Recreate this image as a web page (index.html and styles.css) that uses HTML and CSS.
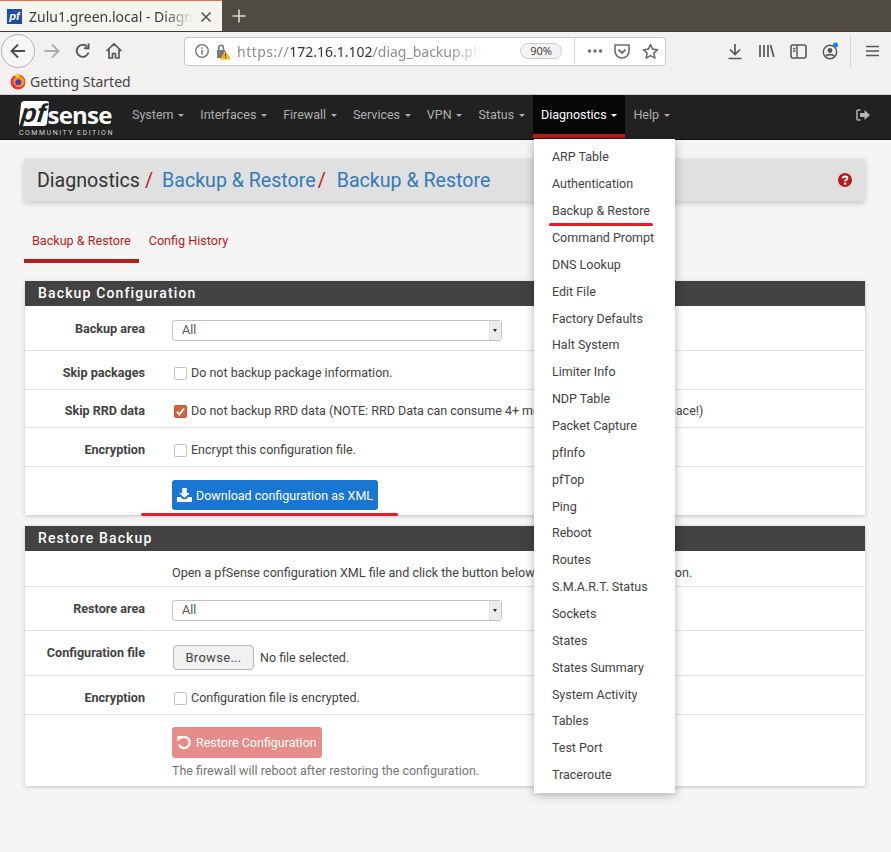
FILE: index.html
```html
<!DOCTYPE html>
<html lang="en">
<head>
    <meta charset="UTF-8">
    <title>Zulu1.green.local - Diagnostics: Backup &amp; Restore</title>
    <link rel="stylesheet" href="styles.css">
</head>
<body>
  <div class="tabbar">
    <div class="tab">
      <span class="favicon">pf</span>
      <span class="tab-title">Zulu1.green.local - Diagnostics</span>
      <svg class="tab-close" width="12" height="12" viewBox="0 0 12 12"><path d="M1.5 1.5l9 9M10.5 1.5l-9 9" stroke="#57534d" stroke-width="1.6"/></svg>
    </div>
    <svg class="tab-new" width="16" height="16" viewBox="0 0 16 16"><path d="M8 1.5v13M1.5 8h13" stroke="#d8d6d2" stroke-width="1.6"/></svg>
  </div>

  <div class="toolbar">
    <div class="back-btn">
      <svg width="18" height="18" viewBox="0 0 18 18"><path d="M16 9H3M9 2.5L2.5 9 9 15.5" fill="none" stroke="#4b4a48" stroke-width="1.8"/></svg>
    </div>
    <svg class="tool" width="18" height="18" viewBox="0 0 18 18"><path d="M1.5 9H15M9 2.5L15.5 9 9 15.5" fill="none" stroke="#adacaa" stroke-width="1.8"/></svg>
    <svg class="tool" width="18" height="18" viewBox="0 0 18 18"><path d="M14.5 10.5A6 6 0 1 1 13 4.6M14.6 1.6v4.6H10" fill="none" stroke="#57565a" stroke-width="1.9"/></svg>
    <svg class="tool" width="18" height="18" viewBox="0 0 18 18"><path d="M1.5 9L9 2l7.500 7M4 7.500V16h3.500v-4.500h3V16H14V7.500" fill="none" stroke="#57565a" stroke-width="1.7"/></svg>

    <div class="urlbar">
      <svg width="16" height="16" viewBox="0 0 16 16"><circle cx="8" cy="8" r="6.300" fill="none" stroke="#6d6d6d" stroke-width="1.300"/><path d="M8 7v4.500M8 4.200v1.600" stroke="#6d6d6d" stroke-width="1.500"/></svg>
      <svg class="lock" width="16" height="17" viewBox="0 0 16 17"><path d="M2 7h8v8H2z" fill="#7a7a7a"/><path d="M3.800 7V4.500a2.300 2.300 0 0 1 4.600 0V7" fill="none" stroke="#7a7a7a" stroke-width="1.600"/><path d="M10.500 7.500L16 16.500H5z" fill="#f5b418"/><path d="M10.500 10.500v3M10.500 14.500v1" stroke="#4a3a10" stroke-width="1"/></svg>
      <span class="url"><span class="url-dim url-scheme">https://</span>172.16.1.102<span class="url-dim">/diag_backup.php</span></span>
      <span class="zoom-pill">90%</span>
      <span class="url-sep"></span>
      <svg width="16" height="16" viewBox="0 0 16 16" fill="#6d6d6d"><circle cx="2.500" cy="8" r="1.700"/><circle cx="8" cy="8" r="1.700"/><circle cx="13.500" cy="8" r="1.700"/></svg>
      <svg class="pocket" width="16" height="16" viewBox="0 0 16 16"><path d="M1 2h14v6a7 7 0 0 1-14 0z" fill="none" stroke="#6d6d6d" stroke-width="1.600" stroke-linejoin="round"/><path d="M4.500 6.500L8 10l3.500-3.500" fill="none" stroke="#6d6d6d" stroke-width="1.800"/></svg>
      <svg class="star" width="17" height="17" viewBox="0 0 17 17"><path d="M8.500 1.500l2.100 4.600 5 .6-3.700 3.400 1 5-4.400-2.500-4.400 2.500 1-5L1.400 6.700l5-.6z" fill="none" stroke="#6d6d6d" stroke-width="1.600" stroke-linejoin="round"/></svg>
    </div>

    <div class="tool-right">
      <svg width="16" height="17" viewBox="0 0 16 17"><path d="M8 1v10M3 6.500L8 11.500l5-5M1.500 15.500h13" fill="none" stroke="#57565a" stroke-width="1.700"/></svg>
      <svg width="17" height="16" viewBox="0 0 17 16"><path d="M2 2v12M6 2v12M10 2v12M12.500 2l3.300 12" fill="none" stroke="#57565a" stroke-width="1.700"/></svg>
      <svg width="17" height="15" viewBox="0 0 17 15"><rect x="1" y="1" width="15" height="13" rx="2" fill="none" stroke="#57565a" stroke-width="1.600"/><path d="M7 1v13M3 4.500h2.500M3 7h2.500" stroke="#57565a" stroke-width="1.400"/></svg>
      <svg width="17" height="18" viewBox="0 0 17 18"><circle cx="8" cy="10" r="6.700" fill="none" stroke="#57565a" stroke-width="1.400"/><circle cx="8" cy="8.500" r="2.400" fill="#57565a"/><path d="M3.800 14.500c.6-2.500 7.800-2.500 8.400 0" fill="none" stroke="#57565a" stroke-width="1.600"/><circle cx="13.500" cy="3" r="2.500" fill="#0a84ff"/></svg>
      <span class="tool-sep"></span>
      <svg width="13" height="12" viewBox="0 0 13 12"><path d="M0 1.500h13M0 6h13M0 10.500h13" stroke="#57565a" stroke-width="1.700"/></svg>
    </div>
  </div>

  <div class="bookmarks">
    <svg width="16" height="16" viewBox="0 0 16 16"><circle cx="8" cy="8" r="7.500" fill="#e8353f"/><circle cx="9" cy="7.500" r="5.500" fill="#ff980e"/><circle cx="8.300" cy="8.300" r="3" fill="#4a3bc0"/><path d="M4 1.500c2-1 5-1 7 .5-2 0-3 1-3.500 2z" fill="#ffcb2e"/></svg>
    <span>Getting Started</span>
  </div>

  <nav class="navbar">
    <div class="logo">
      <div class="logo-mark"><span class="logo-pf">pf</span><span class="logo-sense">sense</span></div>
      <div class="logo-sub">COMMUNITY EDITION</div>
    </div>
    <ul class="nav-list">
      <li class="nav-item"><a>System <b class="caret"></b></a></li>
      <li class="nav-item"><a>Interfaces <b class="caret"></b></a></li>
      <li class="nav-item"><a>Firewall <b class="caret"></b></a></li>
      <li class="nav-item"><a>Services <b class="caret"></b></a></li>
      <li class="nav-item"><a>VPN <b class="caret"></b></a></li>
      <li class="nav-item"><a>Status <b class="caret"></b></a></li>
      <li class="nav-item open">
        <a>Diagnostics <b class="caret"></b></a>
        <ul class="dropdown">
          <li>ARP Table</li>
          <li>Authentication</li>
          <li>Backup &amp; Restore</li>
          <li>Command Prompt</li>
          <li>DNS Lookup</li>
          <li>Edit File</li>
          <li>Factory Defaults</li>
          <li>Halt System</li>
          <li>Limiter Info</li>
          <li>NDP Table</li>
          <li>Packet Capture</li>
          <li>pfInfo</li>
          <li>pfTop</li>
          <li>Ping</li>
          <li>Reboot</li>
          <li>Routes</li>
          <li>S.M.A.R.T. Status</li>
          <li>Sockets</li>
          <li>States</li>
          <li>States Summary</li>
          <li>System Activity</li>
          <li>Tables</li>
          <li>Test Port</li>
          <li>Traceroute</li>
        </ul>
      </li>
      <li class="nav-item"><a>Help <b class="caret"></b></a></li>
    </ul>
    <svg class="logout" width="14" height="12" viewBox="0 0 14 12"><path d="M4.500 1H2a1 1 0 0 0-1 1v8a1 1 0 0 0 1 1h2.500" fill="none" stroke="#b5b5b5" stroke-width="1.500"/><path d="M4 4h4.500V1L14 6l-5.500 5V8H4z" fill="#b5b5b5"/></svg>
  </nav>

  <main class="page">
    <div class="crumbs">
      <span>Diagnostics</span><span class="slash">/</span>
      <a class="crumb-link">Backup &amp; Restore</a><span class="slash slash-tight">/</span>
      <a class="crumb-link">Backup &amp; Restore</a>
      <svg class="help" width="14" height="14" viewBox="0 0 14 14"><circle cx="7" cy="7" r="7" fill="#b71c1c"/><path d="M4.600 5.300C4.800 2.900 9.400 2.900 9.400 5.300c0 1.600-2.200 1.500-2.300 3" fill="none" stroke="#fff" stroke-width="1.900"/><rect x="6" y="9.500" width="2.200" height="2.100" fill="#fff"/></svg>
    </div>

    <div class="tabs">
      <a class="page-tab active">Backup &amp; Restore</a>
      <a class="page-tab">Config History</a>
    </div>

    <section class="panel">
      <h2 class="panel-title">Backup Configuration</h2>
      <div class="row row-45">
        <label class="row-label">Backup area</label>
        <div class="select"><span>All</span><span class="select-arrow"></span></div>
      </div>
      <div class="row row-39">
        <label class="row-label">Skip packages</label>
        <div class="check-line"><span class="check"></span>Do not backup package information.</div>
      </div>
      <div class="row row-38">
        <label class="row-label">Skip RRD data</label>
        <div class="check-line">
          <span class="check checked"><svg width="13" height="13" viewBox="0 0 13 13"><path d="M3 6.800l2.500 2.500L10 3.500" fill="none" stroke="#fff" stroke-width="1.800"/></svg></span>Do not backup RRD data (NOTE: RRD Data can consume 4+ megabytes of config.xml space!)
        </div>
      </div>
      <div class="row row-39">
        <label class="row-label">Encryption</label>
        <div class="check-line"><span class="check"></span>Encrypt this configuration file.</div>
      </div>
      <div class="row row-action">
        <span class="row-label"></span>
        <button class="btn btn-blue">
          <svg width="15" height="14" viewBox="0 0 15 14" fill="#fff"><path d="M5.200 0h4.600v5h3L7.500 10 2.200 5h3z"/><path d="M0 9h3.500l2.500 2.300h3L11.500 9H15v5H0z"/></svg>
          Download configuration as XML
        </button>
      </div>
    </section>

    <section class="panel panel-restore">
      <h2 class="panel-title">Restore Backup</h2>
      <div class="row row-36">
        <span class="row-label"></span>
        <div class="row-text">Open a pfSense configuration XML file and click the button below to restore the configuration.</div>
      </div>
      <div class="row row-44">
        <label class="row-label">Restore area</label>
        <div class="select"><span>All</span><span class="select-arrow"></span></div>
      </div>
      <div class="row row-file">
        <label class="row-label label-high">Configuration file</label>
        <div class="file-line"><span class="browse">Browse...</span>No file selected.</div>
      </div>
      <div class="row row-39">
        <label class="row-label">Encryption</label>
        <div class="check-line"><span class="check"></span>Configuration file is encrypted.</div>
      </div>
      <div class="row row-action-last">
        <span class="row-label"></span>
        <div>
          <button class="btn btn-red">
            <svg width="15" height="15" viewBox="0 0 15 15"><path d="M3.200 3.400A5.600 5.600 0 1 1 2 9.800" fill="none" stroke="#fff" stroke-width="2.400"/><path d="M.5 1h5.500L.5 6.500z" fill="#fff"/></svg>
            Restore Configuration
          </button>
          <div class="hint">The firewall will reboot after restoring the configuration.</div>
        </div>
      </div>
    </section>
  </main>

  <!-- red marks drawn over the screenshot -->
  <span class="mark mark-menu"></span>
  <span class="mark mark-download"></span>
</body>
</html>
```

FILE: styles.css
```css
* {
    box-sizing: border-box;
}

html, body {
    margin: 0;
    padding: 0;
}

body {
    position: relative;
    height: 852px;
    overflow: hidden;
    font-family: Roboto, "Liberation Sans", sans-serif;
    font-size: 12.5px;
    color: #424242;
    background-color: #f5f5f5;
}

/* browser chrome */
.tabbar {
    display: flex;
    align-items: center;
    height: 31px;
    background-color: #4f4b43;
}

.tab {
    display: flex;
    align-items: center;
    width: 222px;
    height: 31px;
    padding: 1px 0 0 7px;
    background-color: #f5f4f2;
    border-top: 1px solid #f0703a;
}

.favicon {
    width: 15px;
    height: 15px;
    flex: none;
    background-color: #1f4ea8;
    color: #fff;
    font: italic bold 11px/14px "Liberation Sans", sans-serif;
    text-align: center;
}

.tab-title {
    width: 164px;
    margin: 0 7px;
    overflow: hidden;
    white-space: nowrap;
    font-family: "Noto Sans", sans-serif;
    font-size: 14px;
    color: #3c3a37;
    -webkit-mask-image: linear-gradient(to right, #000 82%, transparent 100%);
    mask-image: linear-gradient(to right, #000 82%, transparent 100%);
}

.tab-new {
    margin-left: 9px;
}

.toolbar {
    display: flex;
    align-items: center;
    height: 37px;
    padding: 2px 0 0 1px;
    background-color: #f2f1ef;
    border-top: 1px solid #3f3c36;
}

.back-btn {
    display: flex;
    align-items: center;
    justify-content: center;
    width: 34px;
    height: 34px;
    flex: none;
    background-color: #f7f6f5;
    border: 1px solid #b4b3b1;
    border-radius: 50%;
}

.tool {
    margin-left: 8px;
    flex: none;
}

.tool + .tool {
    margin-left: 13px;
}

.urlbar {
    display: flex;
    align-items: center;
    width: 482px;
    height: 29px;
    margin-left: 61px;
    padding: 0 5px 0 9px;
    background-color: #fff;
    border: 1px solid #c8c7c5;
    border-radius: 4px;
    font-family: "Noto Sans", sans-serif;
    flex: none;
}

.lock {
    margin-left: 5px;
}

.url {
    width: 246px;
    margin-left: 6px;
    overflow: hidden;
    white-space: nowrap;
    font-size: 14px;
    color: #333;
    -webkit-mask-image: linear-gradient(to right, #000 86%, transparent 100%);
    mask-image: linear-gradient(to right, #000 86%, transparent 100%);
}

.url-dim {
    color: #8c8c8c;
}

.url-scheme {
    letter-spacing: 0.5px;
}

.zoom-pill {
    width: 42px;
    height: 16px;
    margin-left: 37px;
    background-color: #f3f3f3;
    border: 1px solid #cfcfcf;
    border-radius: 8px;
    font-size: 11px;
    line-height: 14px;
    text-align: center;
    color: #444;
}

.url-sep {
    width: 1px;
    height: 26px;
    margin: 0 12px;
    background-color: #d0d0d0;
}

.pocket {
    margin-left: 11px;
}

.star {
    margin-left: 12px;
}

.tool-right {
    display: flex;
    align-items: center;
    margin-left: 61px;
    gap: 15px;
}

.tool-sep {
    width: 1px;
    height: 34px;
    margin-left: -4px;
    background-color: #d6d5d3;
}

.bookmarks {
    display: flex;
    align-items: center;
    gap: 4px;
    height: 27px;
    padding: 1px 0 0 10px;
    background-color: #f2f1ef;
    border-bottom: 1px solid #d0cfcd;
    font-family: "Noto Sans", sans-serif;
    font-size: 14px;
    color: #45433f;
}

/* pfsense nav */
.navbar {
    display: flex;
    align-items: flex-start;
    height: 45px;
    background-color: #212121;
    border-bottom: 1px solid #0d0d0d;
}

.logo {
    width: 124px;
    padding: 5px 0 0 20px;
    flex: none;
}

.logo-mark {
    display: flex;
    align-items: center;
    height: 26px;
    color: #fff;
}

.logo-pf {
    padding: 0 2px 0 1px;
    background-color: #fff;
    border-radius: 3px;
    color: #212121;
    font: italic bold 26px/25px "Liberation Sans", sans-serif;
    transform: skewX(-6deg);
}

.logo-sense {
    margin: 3px 0 0 0;
    font: bold 24px/20px "Open Sans", sans-serif;
    letter-spacing: -0.8px;
}

.logo-sub {
    height: 9px;
    margin: 3px 0 0 -1px;
    color: #d5d5d5;
    font-size: 7px;
    line-height: 9px;
    letter-spacing: 1.500px;
    white-space: nowrap;
}

.nav-list {
    display: flex;
    margin: 0;
    padding: 0;
    list-style: none;
}

.nav-item {
    position: relative;
}

.nav-item > a {
    display: block;
    height: 43px;
    padding: 12px 8px 0;
    color: #afafaf;
    white-space: nowrap;
}

.caret {
    display: inline-block;
    width: 0;
    height: 0;
    margin-left: 1.700px;
    vertical-align: middle;
    border-top: 3px solid currentColor;
    border-left: 3px solid transparent;
    border-right: 3px solid transparent;
}

.nav-item.open > a {
    background-color: #060606;
    border-bottom: 4px solid #b71c1c;
    color: #fff;
}

.dropdown {
    position: absolute;
    top: 44px;
    left: 1px;
    z-index: 5;
    width: 141px;
    height: 654px;
    margin: 0;
    padding: 5.400px 0 0;
    list-style: none;
    background-color: #fff;
    box-shadow: 0 2px 9px rgba(0, 0, 0, 0.3);
}

.dropdown li {
    height: 26.87px;
    padding: 5px 0 0 18px;
    white-space: nowrap;
}

.logout {
    margin: 14px 0 0 178px;
}

/* page */
.page {
    padding: 19px 26px 0 24px;
}

.crumbs {
    display: flex;
    align-items: center;
    height: 42px;
    padding: 0 13px;
    background-color: #e0e0e0;
    box-shadow: 0 2px 6px rgba(0, 0, 0, 0.2);
    font-size: 19.6px;
    color: #333;
}

.slash {
    margin: 0 9px 0 5px;
    color: #b71c1c;
}

.slash-tight {
    margin: 0 11px 0 2px;
}

.crumb-link {
    color: #337ab7;
}

.help {
    margin-left: auto;
}

.tabs {
    display: flex;
    gap: 2px;
    height: 41px;
    margin-top: 21px;
    font-size: 12.6px;
}

.page-tab {
    padding: 11px 8px 0;
    color: #b71c1c;
    white-space: nowrap;
}

.page-tab.active {
    border-bottom: 4px solid #b71c1c;
}

.panel {
    margin: 18px 0 0 1px;
    background-color: #fff;
    box-shadow: 0 1px 4px rgba(0, 0, 0, 0.2);
}

.panel-restore {
    margin-top: 11px;
}

.panel-title {
    height: 25px;
    margin: 0;
    padding: 0 13px;
    background-color: #424242;
    color: #fff;
    font-size: 14px;
    font-weight: 500;
    line-height: 25px;
    letter-spacing: 1.150px;
}

.row {
    display: grid;
    grid-template-columns: 120px 1fr;
    column-gap: 27px;
    align-items: center;
    border-bottom: 1px solid #e0e0e0;
}

.row:last-child {
    border-bottom: none;
}

.row-36 { height: 36px; padding-top: 8px; }
.row-38 { height: 38px; padding-top: 4px; }
.row-39 { height: 39px; padding-top: 5px; }
.row-44 { height: 44px; }
.row-45 { height: 45px; }
.row-file { height: 45px; }
.row-action { height: 48px; }
.row-action-last { height: 71px; padding-top: 4px; }

.row-label {
    font-size: 12.6px;
    font-weight: 700;
    text-align: right;
    color: #424242;
}

.label-high {
    margin-top: -2px;
}

.select {
    display: flex;
    justify-content: space-between;
    width: 330px;
    height: 21px;
    margin-top: 4px;
    padding-left: 9px;
    background-color: #fff;
    border: 1px solid #c4c4c4;
    border-radius: 3px;
    line-height: 17px;
    color: #555;
}

.select-arrow {
    position: relative;
    width: 12px;
    background-color: #ececec;
    border-left: 1px solid #e0e0e0;
}

.select-arrow::after {
    content: "";
    position: absolute;
    top: 8px;
    left: 3px;
    border-top: 3px solid #222;
    border-left: 2.500px solid transparent;
    border-right: 2.500px solid transparent;
}

.check-line {
    display: flex;
    align-items: center;
    white-space: nowrap;
    padding-left: 2px;
}

.check {
    display: inline-block;
    width: 13px;
    height: 13px;
    margin-right: 4px;
    flex: none;
    background-color: #fff;
    border: 1px solid #c4c4c4;
    border-radius: 2px;
    position: relative;
    top: 1px;
}

.check.checked {
    display: flex;
    background-color: #d0643a;
    border-color: #c45a32;
}

.check.checked svg {
    margin: -1px;
    flex: none;
}

.btn {
    display: flex;
    align-items: center;
    gap: 4px;
    height: 31px;
    padding: 0 0 0 5px;
    border: none;
    border-radius: 3px;
    font-family: inherit;
    font-size: 12.5px;
    color: #fff;
}

.btn-blue {
    width: 206px;
    height: 30px;
    margin-top: 8px;
    background-color: #1976d2;
}

.btn-red {
    width: 150px;
    background-color: #e68d8a;
}

.row-text {
    font-size: 12.57px;
    white-space: nowrap;
}

.file-line {
    display: flex;
    align-items: center;
    margin-top: 8px;
    white-space: nowrap;
}

.browse {
    width: 81px;
    height: 25px;
    margin: 0 6px 0 1px;
    background-color: #f1f1f1;
    border: 1px solid #b5b5b5;
    border-radius: 4px;
    font-size: 13px;
    line-height: 23px;
    letter-spacing: 0.3px;
    text-align: center;
    color: #444;
}

.hint {
    margin-top: 5px;
    color: #757575;
    white-space: nowrap;
}

/* annotations */
.mark {
    position: absolute;
    z-index: 6;
    height: 3px;
    background-color: #ed1c24;
    border-radius: 2px;
}

.mark-menu {
    top: 223px;
    left: 549px;
    width: 104px;
}

.mark-download {
    top: 513px;
    left: 141px;
    width: 257px;
}
```
